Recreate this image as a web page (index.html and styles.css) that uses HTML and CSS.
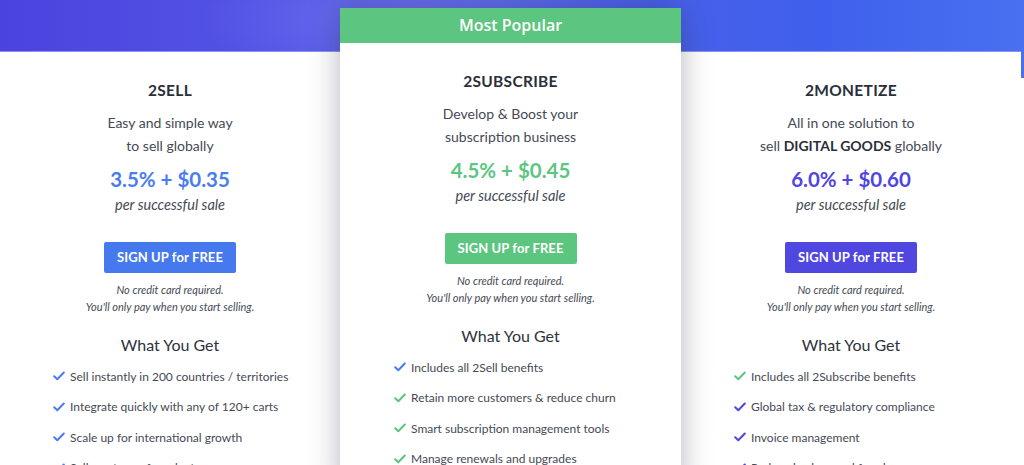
FILE: index.html
```html
<!DOCTYPE html>
<html lang="en">
<head>
<meta charset="utf-8">
<title>Pricing</title>
<link rel="stylesheet" href="styles.css">
</head>
<body>
<div class="page">
  <div class="plans">
    <section class="plan side">
      <h2 class="name">2SELL</h2>
      <p class="desc">Easy and simple way<br>to sell globally</p>
      <div class="price blue">3.5% + $0.35</div>
      <p class="per">per successful sale</p>
      <a class="btn btn-blue" href="#">SIGN UP for FREE</a>
      <p class="note">No credit card required.<br>You'll only pay when you start selling.</p>
      <h3 class="get">What You Get</h3>
      <ul class="feats">
        <li><svg class="chk c-blue" viewBox="0 0 12 10"><path d="M1.2 5.2 L4.3 8.2 L10.8 1.5"/></svg>Sell instantly in 200 countries / territories</li>
        <li><svg class="chk c-blue" viewBox="0 0 12 10"><path d="M1.2 5.2 L4.3 8.2 L10.8 1.5"/></svg>Integrate quickly with any of 120+ carts</li>
        <li><svg class="chk c-blue" viewBox="0 0 12 10"><path d="M1.2 5.2 L4.3 8.2 L10.8 1.5"/></svg>Scale up for international growth</li>
        <li><svg class="chk c-blue" viewBox="0 0 12 10"><path d="M1.2 5.2 L4.3 8.2 L10.8 1.5"/></svg>Sell any type of product</li>
      </ul>
    </section>
    <section class="plan featured">
      <div class="badge">Most Popular</div>
      <div class="body">
        <h2 class="name">2SUBSCRIBE</h2>
        <p class="desc">Develop &amp; Boost your<br>subscription business</p>
        <div class="price green">4.5% + $0.45</div>
        <p class="per">per successful sale</p>
        <a class="btn btn-green" href="#">SIGN UP for FREE</a>
        <p class="note">No credit card required.<br>You'll only pay when you start selling.</p>
        <h3 class="get">What You Get</h3>
        <ul class="feats">
          <li><svg class="chk c-blue" viewBox="0 0 12 10"><path d="M1.2 5.2 L4.3 8.2 L10.8 1.5"/></svg>Includes all 2Sell benefits</li>
          <li><svg class="chk c-green" viewBox="0 0 12 10"><path d="M1.2 5.2 L4.3 8.2 L10.8 1.5"/></svg>Retain more customers &amp; reduce churn</li>
          <li><svg class="chk c-green" viewBox="0 0 12 10"><path d="M1.2 5.2 L4.3 8.2 L10.8 1.5"/></svg>Smart subscription management tools</li>
          <li><svg class="chk c-green" viewBox="0 0 12 10"><path d="M1.2 5.2 L4.3 8.2 L10.8 1.5"/></svg>Manage renewals and upgrades</li>
        </ul>
      </div>
    </section>
    <section class="plan side">
      <h2 class="name">2MONETIZE</h2>
      <p class="desc">All in one solution to<br>sell <b>DIGITAL GOODS</b> globally</p>
      <div class="price purple">6.0% + $0.60</div>
      <p class="per">per successful sale</p>
      <a class="btn btn-purple" href="#">SIGN UP for FREE</a>
      <p class="note">No credit card required.<br>You'll only pay when you start selling.</p>
      <h3 class="get">What You Get</h3>
      <ul class="feats">
        <li><svg class="chk c-green" viewBox="0 0 12 10"><path d="M1.2 5.2 L4.3 8.2 L10.8 1.5"/></svg>Includes all 2Subscribe benefits</li>
        <li><svg class="chk c-purple" viewBox="0 0 12 10"><path d="M1.2 5.2 L4.3 8.2 L10.8 1.5"/></svg>Global tax &amp; regulatory compliance</li>
        <li><svg class="chk c-purple" viewBox="0 0 12 10"><path d="M1.2 5.2 L4.3 8.2 L10.8 1.5"/></svg>Invoice management</li>
        <li><svg class="chk c-purple" viewBox="0 0 12 10"><path d="M1.2 5.2 L4.3 8.2 L10.8 1.5"/></svg>Reduce background fraud</li>
      </ul>
    </section>
  </div>
</div>
</body>
</html>
```

FILE: styles.css
```css
html, body {
  margin: 0;
  padding: 0;
  height: 100%;
  overflow: hidden;
}
body {
  font-family: Lato, "Open Sans", Arial, sans-serif;
  color: #454a55;
  background: #fff;
}
.page {
  width: 1024px;
  height: 465px;
  overflow: hidden;
  background:
    linear-gradient(#4a6ff0, #4a6ff0) right top / 3px 78px no-repeat,
    linear-gradient(#8d92f0, #8d92f0) left 51px / 100% 1px no-repeat,
    radial-gradient(ellipse 220px 60px at 420px 20px, rgba(140, 150, 255, 0.35), transparent),
    linear-gradient(90deg, #4b43de 0%, #5150e4 20%, #5a5fe8 40%, #4a60ea 62%, #3f60ec 80%, #4870f0 100%) left top / 100% 51px no-repeat,
    #fff;
  background-size: 3px 78px, 100% 1px, 100% 51px, 100% 51px, auto;
  background-repeat: no-repeat;
}
.plans {
  display: flex;
  width: 1021px;
  padding-top: 8px;
}
.plan {
  text-align: center;
  box-sizing: border-box;
}
.side {
  width: 340px;
  margin-top: 44px;
  background: #fff;
  height: 420px;
}
.featured {
  width: 341px;
  background: #fff;
  position: relative;
  z-index: 2;
  box-shadow: 0 0 28px rgba(40, 44, 60, 0.35);
  height: 480px;
}
.badge {
  background: #5cc57f;
  color: #fff;
  font-family: "Open Sans", Lato, sans-serif;
  font-weight: 600;
  font-size: 16px;
  height: 35px;
  line-height: 34px;
}
.name {
  margin: 28px 0 0;
  font-size: 15.5px;
  font-weight: 700;
  color: #2b2f3a;
  letter-spacing: 0.3px;
  line-height: 20px;
}
.desc {
  margin: 11px 0 0;
  font-size: 14px;
  line-height: 23px;
  color: #454a55;
}
.desc b {
  color: #2b2f3a;
  font-weight: 700;
}
.price {
  margin-top: 9px;
  font-size: 20.5px;
  font-weight: 700;
  line-height: 26px;
}
.blue { color: #4a7cf0; }
.green { color: #5cc57f; }
.purple { color: #5045e0; }
.per {
  margin: 3px 0 0;
  font-size: 14.5px;
  font-style: italic;
  line-height: 20px;
  color: #454a55;
}
.btn {
  display: inline-block;
  margin-top: 27px;
  width: 132px;
  height: 31px;
  line-height: 31px;
  border-radius: 2px;
  color: #fff;
  text-decoration: none;
  font-size: 13px;
  font-weight: 700;
  letter-spacing: 0.1px;
}
.btn-blue { background: #4679ee; }
.btn-green { background: #5cc57f; }
.btn-purple { background: #5046e0; }
.note {
  margin: 8px 0 0;
  font-size: 11px;
  font-style: italic;
  line-height: 17px;
  color: #454a55;
}
.get {
  margin: 19px 0 0;
  font-size: 16px;
  font-weight: 400;
  color: #2e323c;
  line-height: 22px;
}
.feats {
  list-style: none;
  margin: 5px 0 0;
  padding: 0 0 0 53px;
  text-align: left;
}
.featured .feats {
  padding-left: 54px;
}
.feats li {
  display: flex;
  align-items: center;
  height: 30.5px;
  font-size: 12px;
  color: #454a55;
}
.chk {
  width: 12px;
  height: 10px;
  margin-right: 5px;
  fill: none;
  stroke-width: 2;
  stroke-linecap: round;
  stroke-linejoin: round;
}
.c-blue { stroke: #4a7cf0; }
.c-green { stroke: #5cc57f; }
.c-purple { stroke: #5045e0; }
```
